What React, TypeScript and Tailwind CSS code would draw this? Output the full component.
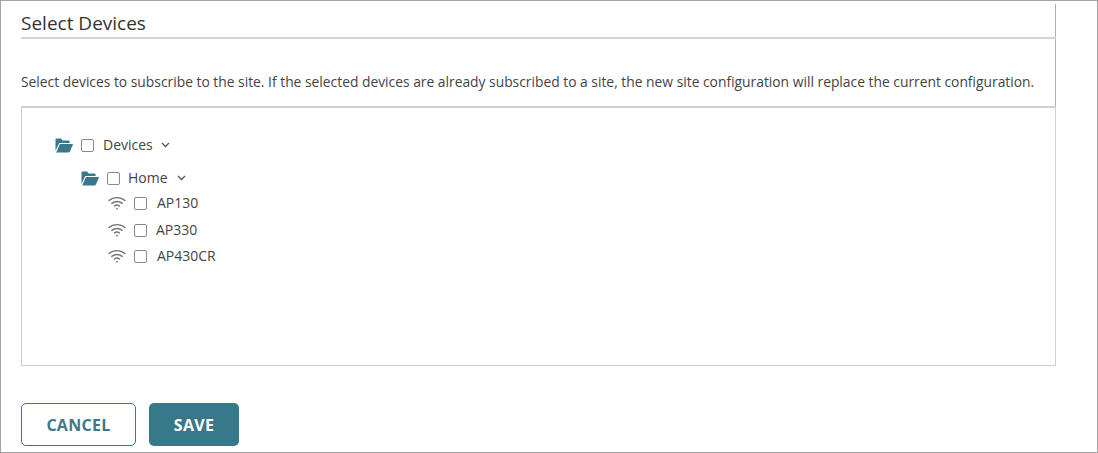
function Box() {
  return <span className="block w-[13px] h-[13px] shrink-0 border border-[#8a8a8a] rounded-[2px] bg-white" />;
}

function Folder() {
  return (
    <svg viewBox="0 0 18 15" className="w-[18px] h-[15px] shrink-0">
      <path d="M0.5 13V1.6Q0.5 0.5 1.6 0.5H6L7.6 2.4H13.4Q14.6 2.4 14.6 3.6V5H4.2L0.5 13Z" fill="#37788a" />
      <path d="M4.9 6H17.2Q18.2 6 17.8 7L14.9 13.6Q14.5 14.5 13.5 14.5H1.2L4.9 6Z" fill="#37788a" />
    </svg>
  );
}

function Chevron({ className }: { className: string }) {
  return (
    <svg viewBox="0 0 9 6" className={`w-[9px] h-[6px] ${className}`} fill="none" stroke="#555" strokeWidth="1.3">
      <path d="M1 1L4.5 4.5L8 1" />
    </svg>
  );
}

function WifiIcon() {
  return (
    <svg viewBox="0 0 18 14" className="w-[18px] h-[14px] shrink-0" fill="none" stroke="#777" strokeWidth="1.4" strokeLinecap="round">
      <path d="M1 4.6C5.5 0.6 12.5 0.6 17 4.6" />
      <path d="M3.8 7.4C6.8 4.9 11.2 4.9 14.2 7.4" />
      <path d="M6.5 10C8 8.8 10 8.8 11.5 10" />
      <circle cx="9" cy="12.7" r="0.9" fill="#777" stroke="none" />
    </svg>
  );
}

function FolderRow({ label, className, labelGap, chevGap }: { label: string; className: string; labelGap: string; chevGap: string }) {
  return (
    <div className={`flex items-center ${className}`}>
      <Folder />
      <span className="ml-[8px]"><Box /></span>
      <span className={`${labelGap} text-[14px] leading-[20px] text-[#444]`}>{label}</span>
      <Chevron className={chevGap} />
    </div>
  );
}

function DeviceRow({ label, textGap, className }: { label: string; textGap: string; className: string }) {
  return (
    <div className={`flex items-center ml-[86px] h-[20px] ${className}`}>
      <WifiIcon />
      <span className="ml-[8px]"><Box /></span>
      <span className={`${textGap} text-[14px] leading-[20px] text-[#444]`}>{label}</span>
    </div>
  );
}

export default function App() {
  return (
    <div className="w-[1098px] h-[453px] bg-white border border-[#a3a3a3] pl-[20px] pr-[41px] font-['Open_Sans',sans-serif] overflow-hidden">
      <div className="mt-[3px] border-r border-[#b0b0b0] h-[102px]">
        <div className="h-[35px] border-b-2 border-[#d4d4d4] text-[19px] leading-[39px] text-[#333] -mr-px">
          Select Devices
        </div>
        <p className="mt-[33px] text-[13.83px] leading-[20px] text-[#444] whitespace-nowrap">
          Select devices to subscribe to the site. If the selected devices are already subscribed to a site, the new site configuration will replace the current configuration.
        </p>
      </div>
      <div className="h-[260px] border border-t-2 border-[#d0d0d0] pt-[28px]">
        <FolderRow label="Devices" className="ml-[33px] h-[20px] -translate-y-px" labelGap="ml-[9px]" chevGap="ml-[8px]" />
        <FolderRow label="Home" className="ml-[59px] h-[20px] mt-[13px] -translate-y-px" labelGap="ml-[8px]" chevGap="ml-[9px]" />
        <DeviceRow label="AP130" textGap="ml-[10px]" className="mt-[4px]" />
        <DeviceRow label="AP330" textGap="ml-[9px]" className="mt-[7px]" />
        <DeviceRow label="AP430CR" textGap="ml-[10px]" className="mt-[6px]" />
      </div>
      <div className="flex gap-[13px] mt-[37px]">
        <button className="w-[115px] h-[43px] rounded-[5px] border border-[#37788a] bg-white text-[#40788a] text-[16px] font-bold tracking-[0.3px]">
          CANCEL
        </button>
        <button className="w-[90px] h-[43px] rounded-[5px] bg-[#37788a] text-white text-[16px] font-bold tracking-[0.3px]">
          SAVE
        </button>
      </div>
    </div>
  );
}
